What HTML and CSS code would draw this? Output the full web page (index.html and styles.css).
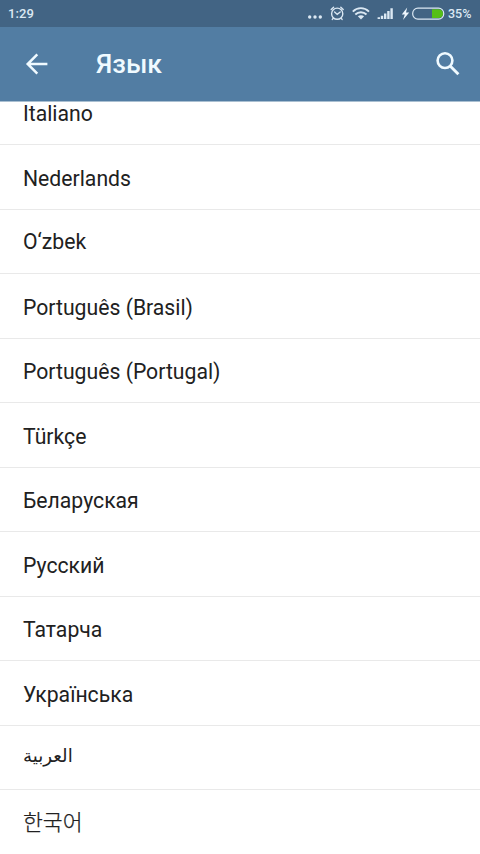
FILE: index.html
```html
<!DOCTYPE html>
<html lang="ru">
<head>
<meta charset="utf-8">
<title>Язык</title>
<link rel="stylesheet" href="styles.css">
</head>
<body>
<div class="screen">
  <div class="status">
    <span class="clock">1:29</span>
    <svg class="status-icons" width="145" height="27" viewBox="0 0 145 27" fill="none" stroke="#dbe8f3">
      <g fill="#dbe8f3" stroke="none"><circle cx="9.7" cy="17" r="1.7"/><circle cx="15" cy="17" r="1.7"/><circle cx="20.3" cy="17" r="1.7"/></g>
      <g stroke-width="1.4" stroke-linecap="round"><circle cx="37.2" cy="13.7" r="5.6"/><path d="M31.2 9.6l2.4-2.4M40.8 7.2l2.4 2.4M34.6 12l2.6 2.4 3-2.4M33.3 18.2l-1 1.2M41.1 18.2l1 1.2"/></g>
      <g stroke-width="1.9"><path d="M52.8 11.6c4.6-4.6 11.5-4.6 16.2 0M55.3 14.5c3.2-3 8-3 11.2 0"/><path d="M57.8 16.3c2-1.5 4.4-1.5 6.3 0L61 19.5z" fill="#dbe8f3" stroke="none"/></g>
      <path stroke-width="2.4" d="M78.8 19v-1.8M82 19v-3.3M85.2 19v-5.6M88.4 19V11M91.6 19V8.3"/>
      <path fill="#edf5fc" stroke="none" d="M107.2 7.6l-5.4 7h3l-1.8 5.4 6.2-7.4h-3.2z"/>
      <rect x="112.7" y="8.1" width="31" height="11" rx="5.2" stroke-width="1.2"/>
      <path fill="#55bf16" stroke="none" d="M132 9.2h6.6a4.4 4.4 0 0 1 0 8.8H132z"/>
    </svg>
    <span class="percent">35%</span>
  </div>
  <header class="bar">
    <svg class="back" width="24" height="24" viewBox="0 0 24 24" fill="none" stroke="#f0faff" stroke-width="2.5"><path d="M23.4 12H4M13.3 2.4L3.7 12l9.6 9.6"/></svg>
    <h1 class="title">Язык</h1>
    <svg class="search" width="26" height="26" viewBox="0 0 26 26" fill="none" stroke="#f0faff"><circle cx="10" cy="9.6" r="7.4" stroke-width="2.6"/><path d="M15.4 15.2l8 8" stroke-width="2.9"/></svg>
  </header>
  <main class="viewport">
    <ul class="list">
      <li>Italiano</li>
      <li>Nederlands</li>
      <li class="raised">O‘zbek</li>
      <li>Português (Brasil)</li>
      <li>Português (Portugal)</li>
      <li>Türkçe</li>
      <li>Беларуская</li>
      <li>Русский</li>
      <li>Татарча</li>
      <li>Українська</li>
      <li class="arabic"><span lang="ar">العربية</span></li>
      <li class="korean" lang="ko">한국어</li>
    </ul>
  </main>
</div>
</body>
</html>
```
FILE: styles.css
```css
* { box-sizing: border-box; }
body { margin: 0; background: #fff; font-family: Roboto, "Noto Sans CJK KR", sans-serif; }
.screen { display: flex; flex-direction: column; height: 854px; overflow: hidden; }
.status {
  display: flex; align-items: center; height: 27px; flex: none;
  padding: 0 8px; background: #426484; color: #dbe8f3;
  font-size: 13px; font-weight: 500; line-height: 27px;
}
.clock { letter-spacing: 0.1px; }
.status-icons { margin-left: auto; }
.percent { width: 24px; margin-left: 3px; font-size: 12.5px; }
.bar {
  display: flex; align-items: center; height: 75px; flex: none;
  padding: 0 19px 0 24px; background: #527da3; color: #f0faff;
  border-bottom: 1px solid #a9bfd1;
}
.title { margin: 0 auto 0 48px; font-size: 26.6px; font-weight: 500; line-height: 30px; }
.viewport { flex: 1; min-height: 0; overflow: hidden; }
.list { list-style: none; margin: -21.6px 0 0; padding: 0; }
.list li {
  display: flex; align-items: center; height: 64.56px;
  padding: 3.6px 23px 0; border-bottom: 1px solid #e9e9e9;
  color: #212121; font-size: 21.2px; line-height: 28px;
}
.list li:last-child { border-bottom: 0; }
.list .raised { padding-top: 2px; }
.list .arabic { padding-top: 0; padding-bottom: 5px; font-family: "Noto Sans", "DejaVu Sans", sans-serif; font-size: 18.2px; }
.list .korean { padding-top: 0; padding-bottom: 4px; font-family: "Noto Sans CJK KR", sans-serif; font-weight: 300; font-size: 21.6px; -webkit-text-stroke: 0.25px #212121; }
```
